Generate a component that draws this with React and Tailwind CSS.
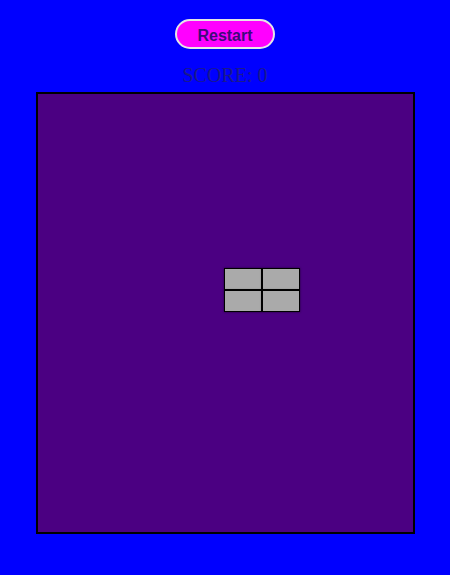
import React, { useState } from "react";

export default function App() {
  const [score, setScore] = useState(0);

  return (
    <div className="w-[450px] h-[575px] bg-[#0000ff] flex flex-col items-center">
      <button
        onClick={() => setScore(0)}
        className="mt-[19px] w-[100px] h-[30px] pt-[3px] rounded-full border-2 border-[#e6e6e6] bg-[#ff00ff] text-[#3f0a7a] text-[16px] font-bold leading-none font-['Liberation_Sans',Arial,sans-serif]"
      >
        Restart
      </button>
      <div className="mt-[13px] h-[26px] text-[20px] leading-[26px] text-[#1a1a8c] font-['Liberation_Serif','Times_New_Roman',serif]">
        SCORE: {score}
      </div>
      {/* board; the falling piece sits at its own spot on the canvas */}
      <div className="mt-[4px] w-[379px] h-[442px] border-2 border-black bg-[#4b0082] relative">
        <div className="absolute left-[186px] top-[174px] grid grid-cols-2">
          <div className="w-[38px] h-[22px] border border-black bg-[#aaaaaa] shadow-[0_0_2px_rgba(0,0,0,0.6)]" />
          <div className="w-[38px] h-[22px] border border-black bg-[#aaaaaa] shadow-[0_0_2px_rgba(0,0,0,0.6)]" />
          <div className="w-[38px] h-[22px] border border-black bg-[#aaaaaa] shadow-[0_0_2px_rgba(0,0,0,0.6)]" />
          <div className="w-[38px] h-[22px] border border-black bg-[#aaaaaa] shadow-[0_0_2px_rgba(0,0,0,0.6)]" />
        </div>
      </div>
    </div>
  );
}
